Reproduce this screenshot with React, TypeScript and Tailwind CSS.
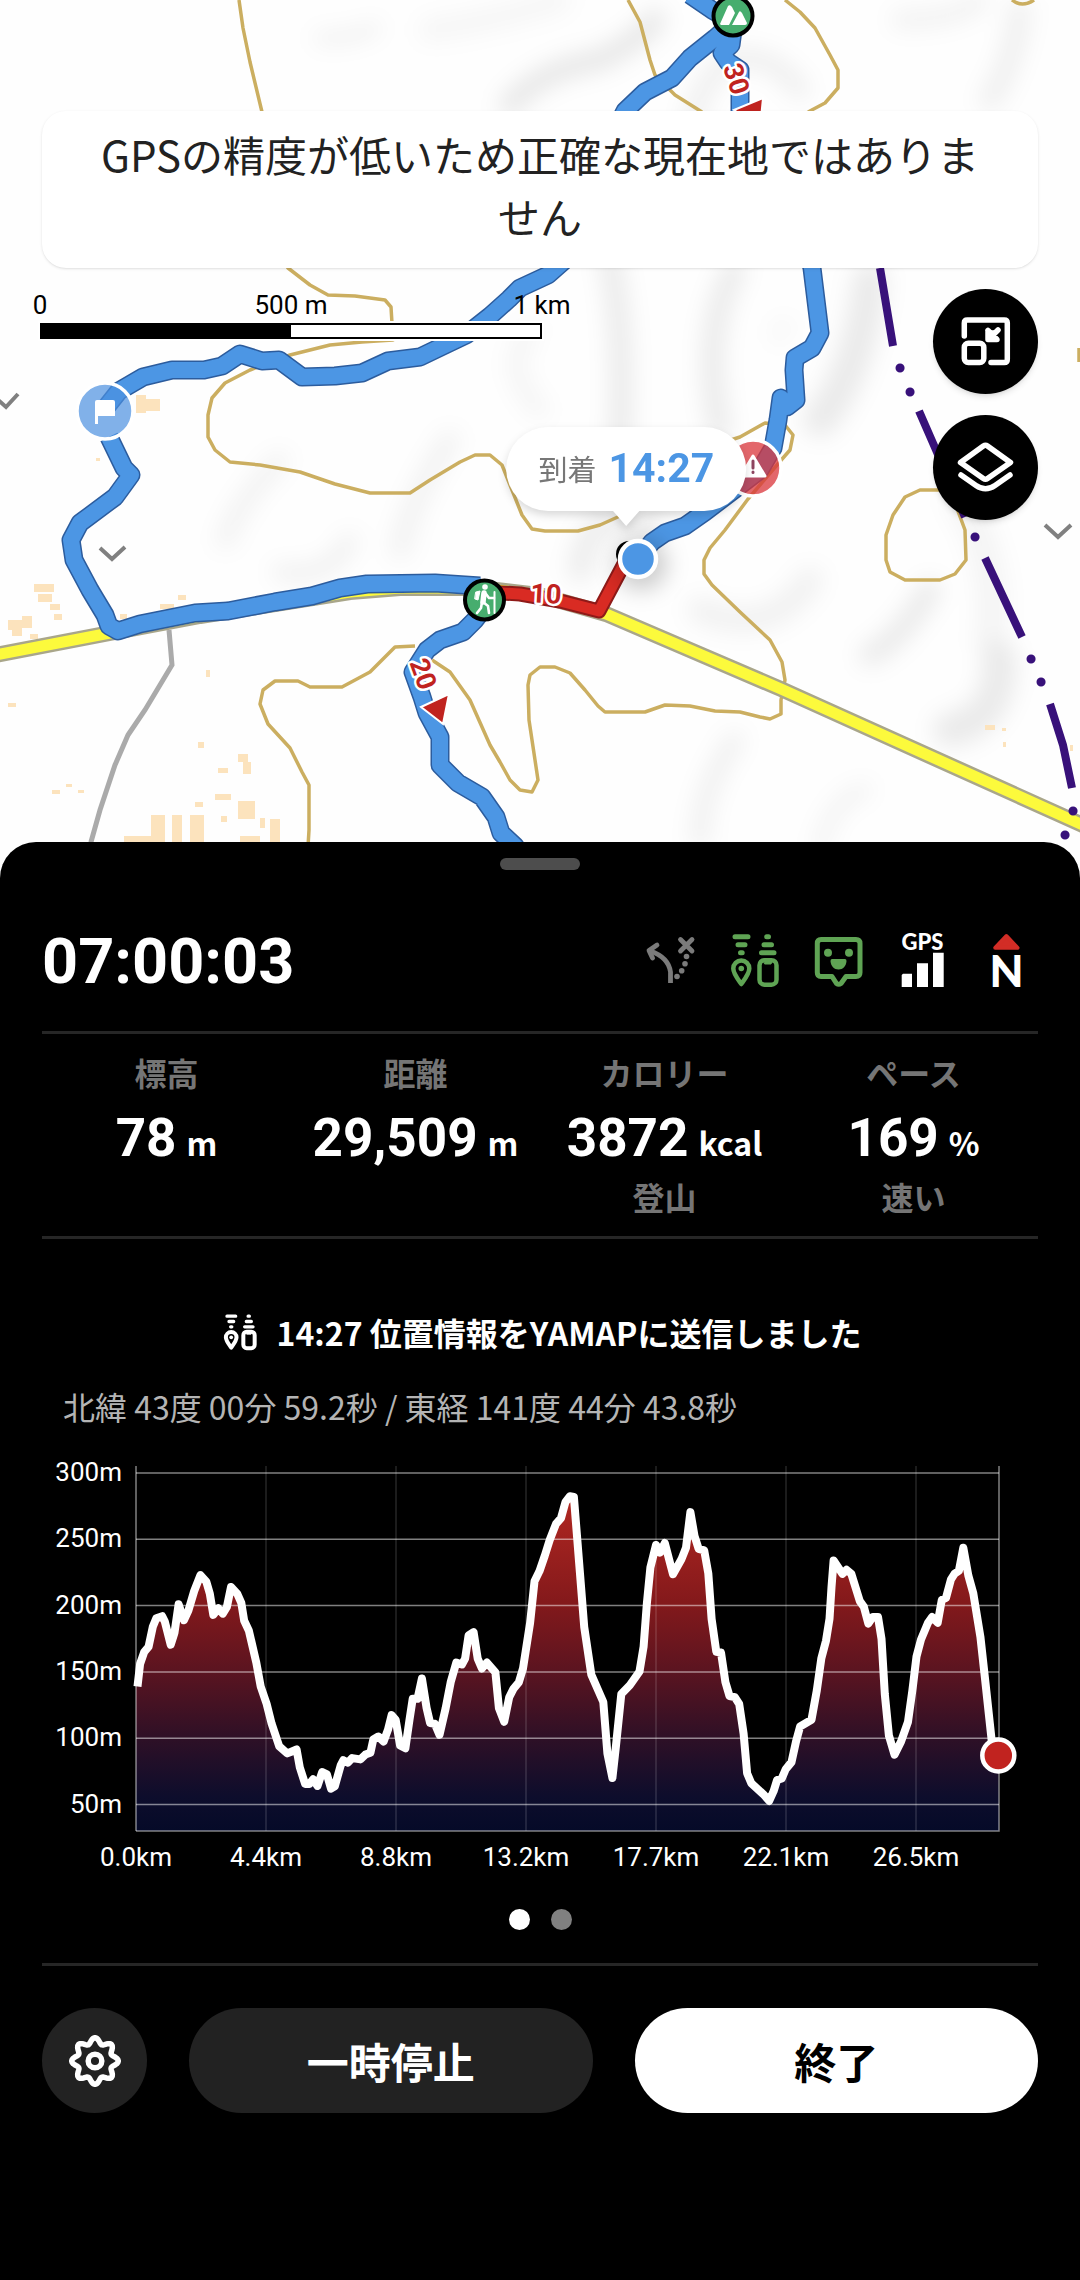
import type { ReactNode } from "react";

const JP = "font-['Noto_Sans_CJK_JP',sans-serif]";
const ROBOTO = "font-['Roboto','Noto_Sans_CJK_JP',sans-serif]";

const stats = [
  { label: "標高", value: "78", unit: "m", note: "" },
  { label: "距離", value: "29,509", unit: "m", note: "" },
  { label: "カロリー", value: "3872", unit: "kcal", note: "登山" },
  { label: "ペース", value: "169", unit: "%", note: "速い" },
];

// [distance km, elevation m]
const profile: [number, number][] = [
  [0.05, 139], [0.14, 156], [0.28, 165], [0.43, 169], [0.57, 184], [0.69, 190.5], [0.89, 192], [0.98, 188],
  [1.18, 170.5], [1.31, 179.5], [1.45, 201], [1.63, 189], [1.78, 196], [1.98, 211], [2.19, 223], [2.39, 218],
  [2.51, 209], [2.63, 193], [2.8, 198], [2.95, 194], [3.09, 199], [3.23, 214], [3.44, 209], [3.58, 202],
  [3.68, 188.5], [3.84, 181], [4.09, 157], [4.24, 139], [4.44, 126], [4.61, 111], [4.87, 94], [5.14, 88.5],
  [5.3, 90], [5.46, 91.5], [5.57, 78], [5.75, 65.5], [5.9, 65.5], [6.02, 69], [6.17, 64], [6.33, 74.5],
  [6.49, 72.7], [6.63, 62], [6.76, 63.7], [6.96, 79.5], [7.05, 83.4], [7.21, 81.6], [7.35, 85], [7.63, 84],
  [7.8, 87.6], [7.97, 89], [8.07, 99], [8.24, 101.3], [8.42, 97.4], [8.57, 106.4], [8.69, 117.4], [8.83, 113.9],
  [8.98, 94.5], [9.16, 92.4], [9.3, 113.9], [9.41, 129.7], [9.57, 129.7], [9.72, 145], [9.88, 122.8], [10, 111.5],
  [10.16, 110.9], [10.32, 102.5], [10.53, 122.8], [10.7, 142.2], [10.89, 157], [11.08, 155.6], [11.19, 160],
  [11.31, 177.5], [11.48, 180], [11.62, 160], [11.76, 152.6], [11.93, 157], [12.22, 149.7], [12.34, 122.8],
  [12.52, 112.4], [12.69, 130.9], [12.83, 137], [13.02, 142.2], [13.16, 152.6], [13.4, 187], [13.55, 218.3],
  [13.72, 226], [13.9, 237.7], [14.07, 249.6], [14.28, 261.6], [14.45, 266], [14.6, 278], [14.75, 282.4],
  [14.89, 281.9], [15.07, 231.7], [15.24, 184], [15.48, 148], [15.89, 127.3], [16.03, 88.5], [16.2, 70],
  [16.32, 94.5], [16.5, 133.3], [16.79, 140], [17.12, 150.3], [17.26, 169], [17.37, 201.9], [17.49, 228.7],
  [17.68, 245.7], [17.82, 240], [17.98, 247.2], [18.26, 223.7], [18.54, 234.7], [18.7, 243.7], [18.85, 270.5],
  [18.99, 252.6], [19.13, 242.8], [19.32, 241.6], [19.46, 224.3], [19.57, 190], [19.73, 165.2], [19.89, 164.6],
  [20.04, 142.2], [20.18, 131.8], [20.36, 131], [20.51, 125.8], [20.66, 103.4], [20.78, 73.6], [20.92, 66],
  [21.33, 57.8], [21.53, 52.7], [21.68, 60], [21.8, 68.5], [21.96, 69.7], [22.09, 76.6], [22.29, 82],
  [22.44, 97.4], [22.58, 108.8], [22.97, 113.9], [23.15, 136], [23.3, 160], [23.46, 173.5], [23.58, 190],
  [23.65, 213.8], [23.72, 234], [24.02, 224], [24.16, 227], [24.32, 224], [24.61, 203.4], [24.75, 199],
  [24.9, 186.4], [25.05, 191.4], [25.23, 191.4], [25.35, 175], [25.46, 133.3], [25.6, 102], [25.79, 87.6],
  [26.01, 97.4], [26.25, 112.4], [26.4, 136.2], [26.54, 161.6], [26.69, 174.4], [26.93, 187], [27.07, 191.4],
  [27.26, 187], [27.4, 204.3], [27.54, 205.8], [27.71, 219.8], [27.83, 224], [27.98, 226.3], [28.13, 243.7],
  [28.3, 222.8], [28.47, 209.3], [28.71, 176.5], [28.88, 142.2], [29.1, 97.4], [29.32, 87],
];

const PLOT = { left: 94, right: 957, top: 17, bottom: 382 };
const xAt = (km: number) => PLOT.left + km * 29.41;
const yAt = (m: number) => 355.5 - (m - 50) * 1.326;

function ElevationChart() {
  const line = profile.map(([km, m]) => `${xAt(km).toFixed(1)},${yAt(m).toFixed(1)}`).join(" ");
  const [lastKm, lastM] = profile[profile.length - 1];

  return (
    <svg viewBox="0 0 996 430" className={`mt-[19px] w-full ${ROBOTO}`} role="img" aria-label="標高グラフ">
      <defs>
        <linearGradient id="elevation" gradientUnits="userSpaceOnUse" x1="0" y1="45" x2="0" y2="382">
          <stop offset="0" stopColor="#b32822" />
          <stop offset="0.32" stopColor="#84191b" />
          <stop offset="0.52" stopColor="#5c1420" />
          <stop offset="0.72" stopColor="#2f1026" />
          <stop offset="0.9" stopColor="#0d0d2c" />
          <stop offset="1" stopColor="#050a28" />
        </linearGradient>
      </defs>
      <polygon
        points={`${PLOT.left},${PLOT.bottom} ${PLOT.left},237 ${line} ${PLOT.right},${PLOT.bottom}`}
        fill="url(#elevation)"
      />
      {["0.0", "4.4", "8.8", "13.2", "17.7", "22.1", "26.5"].map((km, i) => (
        <g key={km}>
          <line
            x1={PLOT.left + i * 130}
            x2={PLOT.left + i * 130}
            y1={PLOT.top}
            y2={PLOT.bottom}
            stroke="#fff"
            strokeOpacity={i === 0 ? 0.5 : 0.15}
            strokeWidth="1.5"
          />
          <text x={PLOT.left + i * 130} y="417" fontSize="26" fill="#fff" textAnchor="middle">
            {km}km
          </text>
        </g>
      ))}
      {[300, 250, 200, 150, 100, 50].map((m) => (
        <g key={m}>
          <line x1={PLOT.left} x2={PLOT.right} y1={yAt(m)} y2={yAt(m)} stroke="#fff" strokeOpacity="0.5" strokeWidth="1.5" />
          <text x="80" y={yAt(m) + 8} fontSize="26" fill="#fff" textAnchor="end">
            {m}m
          </text>
        </g>
      ))}
      <path
        d={`M${PLOT.left} ${PLOT.bottom}H${PLOT.right}V${PLOT.top}`}
        fill="none"
        stroke="#fff"
        strokeOpacity="0.5"
        strokeWidth="1.5"
      />
      <polyline points={line} fill="none" stroke="#fff" strokeWidth="8" strokeLinejoin="round" />
      <circle cx={xAt(lastKm)} cy={yAt(lastM)} r="16" fill="#c1231f" stroke="#fff" strokeWidth="4.5" />
    </svg>
  );
}

const contours = [
  "M239 0L243 28L250 62L262 112",
  "M275 250L288 268L310 285L328 295L355 296L385 300L391 307L393 340L362 342L330 345L290 355L250 370L225 383L212 398L208 415V437L215 450L230 462L260 465L300 472L335 484L370 493H410L430 480L460 462L475 455H490L502 465L510 485L522 515L532 529L545 531H578L600 525L620 516L700 450L740 437L765 423L785 425L793 435L790 450L783 458L748 499L725 530L710 548L704 560V574L712 585L740 612L770 640L782 662L785 680L781 700V714L770 719L760 717L740 712L715 711L690 706L665 705L645 712H605L598 706L585 690L570 673L555 667H540L530 675L528 685L529 720L535 760L538 780L532 792L520 790L510 780L500 762L490 745L470 700L450 672L432 660",
  "M415 646L395 647L370 672L342 687H310L298 681H275L263 690L260 704L268 724L290 748L302 772L309 785V830L306 880",
  "M920 490H940L955 503L965 530L966 560L955 574L940 580H905L890 572L886 560V535L893 515L905 497Z",
  "M628 0L640 22L650 60L655 75L675 95L702 112",
  "M785 0L800 12L815 28L830 55L838 70V88L825 103L808 112",
  "M1012 0Q1022 8 1034 0M1079 348V362",
];

const route =
  "M104 410L119 391L143 377L172 370H204L222 366L240 354L262 361L279 360L302 377L335 376L362 373L388 361L420 357L445 345L466 335L490 316L509 299L520 288L548 275L565 260L600 160L625 111L645 92L672 78L690 58L715 38L733 22L712 10L690 -5" +
  "M733 30L731 45L722 53L728 62L740 70V111L790 180L812 268L820 333L812 348L795 358L794 370L796 400L787 407L781 398L778 420L773 448L760 470L705 512L685 526L665 533L652 542L638 560" +
  "M109 437L124 468L131 475L115 497L80 523L71 540L74 560L90 590L105 615L109 626L118 631L140 624L195 613L228 611L275 602L312 596L340 588L367 584L435 583L480 586" +
  "M484 608L475 620L463 632L440 640L427 650L413 672L422 697L427 713L440 737V765L458 783L482 797L496 817L501 833L515 846L530 870";

// soft relief: [path, stroke width, opacity]
const shades: [string, number, number][] = [
  ["M320 38Q350 40 375 28", 12, 0.06],
  ["M430 30Q500 20 560 0", 24, 0.03],
  ["M510 105Q540 70 600 60Q640 40 655 20", 22, 0.09],
  ["M690 130Q700 80 730 60Q770 50 800 90", 20, 0.06],
  ["M610 260Q625 330 620 440", 22, 0.08],
  ["M735 270Q700 330 720 430", 22, 0.08],
  ["M870 280Q860 370 820 420", 34, 0.08],
  ["M900 20Q960 20 980 0", 18, 0.05],
  ["M990 100Q1015 60 1020 10", 22, 0.06],
  ["M225 540Q240 500 280 460", 18, 0.05],
  ["M280 572Q330 580 350 540", 16, 0.06],
  ["M400 550Q410 500 450 440", 20, 0.05],
  ["M580 570Q590 500 650 525", 24, 0.07],
  ["M700 610Q770 640 810 580", 26, 0.05],
  ["M870 655Q900 640 930 590", 22, 0.08],
  ["M950 730Q1000 720 1000 660", 34, 0.08],
  ["M700 840Q700 790 735 740", 18, 0.06],
  ["M820 850Q830 800 865 790", 14, 0.05],
  ["M540 410Q500 370 530 330", 18, 0.04],
  ["M990 640Q1000 560 960 500", 30, 0.04],
  ["M780 340Q770 325 790 325", 8, 0.05],
];

const buildings: [number, number, number, number][] = [
  [136, 395, 10, 18], [146, 399, 14, 12], [34, 584, 20, 8], [38, 594, 14, 8], [8, 620, 14, 10], [22, 616, 10, 12],
  [12, 630, 10, 6], [50, 604, 10, 6], [54, 614, 8, 6], [30, 634, 8, 5], [120, 614, 7, 5], [160, 604, 14, 5],
  [178, 595, 8, 5], [206, 670, 4, 7], [8, 703, 8, 4], [198, 742, 6, 6], [238, 754, 10, 8], [243, 762, 8, 12],
  [218, 768, 10, 5], [52, 790, 8, 4], [66, 784, 6, 3], [78, 790, 6, 3], [215, 794, 16, 6], [238, 801, 17, 18],
  [151, 815, 14, 30], [172, 815, 10, 30], [190, 815, 14, 30], [124, 836, 30, 8], [195, 802, 8, 5], [221, 816, 6, 6],
  [260, 818, 5, 10], [270, 819, 10, 26], [240, 836, 20, 8], [985, 725, 10, 5], [1002, 728, 4, 3], [1003, 742, 3, 5],
  [1070, 745, 3, 6], [96, 458, 4, 3],
];

const road = "M-5 655L110 633L200 616L300 600L350 592L400 588L480 588L540 595L606 614L781 689L1085 826";

function TrailMap() {
  return (
    <svg
      viewBox="0 0 1080 878"
      preserveAspectRatio="xMidYMin slice"
      className={`absolute inset-0 h-full w-full ${ROBOTO}`}
      role="img"
      aria-label="地図"
    >
      <defs>
        <filter id="shade" filterUnits="userSpaceOnUse" x="0" y="0" width="1080" height="878">
          <feGaussianBlur stdDeviation="11" />
        </filter>
      </defs>
      <rect width="1080" height="878" fill="#fefefe" />
      <g filter="url(#shade)" fill="none" stroke="#000" strokeLinecap="round">
        {shades.map(([d, width, opacity]) => (
          <path key={d} d={d} strokeWidth={width} strokeOpacity={opacity} />
        ))}
      </g>
      {buildings.map(([x, y, w, h]) => (
        <rect key={`${x}-${y}`} x={x} y={y} width={w} height={h} fill="#fce3bd" />
      ))}
      <g fill="none" stroke="#cbae60" strokeWidth="3.5" strokeLinejoin="round">
        {contours.map((d) => (
          <path key={d} d={d} />
        ))}
      </g>
      <path
        d="M-4 398L6 407L18 394M100 548L112 559L125 547M1045 525L1058 537L1071 525"
        fill="none"
        stroke="#808080"
        strokeWidth="4"
      />

      {/* Roads */}
      <path d="M169 630L172 665L145 710L128 735L115 765L100 810L91 842L80 878" fill="none" stroke="#aaa" strokeWidth="5" />
      <path d={road} fill="none" stroke="#a9a68a" strokeWidth="16" />
      <path d={road} fill="none" stroke="#fcfa3c" strokeWidth="11" />

      {/* Boundary */}
      <g fill="none" stroke="#38117a" strokeWidth="8">
        <path d="M880 268L893 346M919 411L936 450L965 517M985 558L1022 637M1050 704L1063 745L1072 788" />
        <path
          d="M900 368h.1M910 392h.1M975 537h.1M1031 659h.1M1041 682h.1M1073 811h.1M1065 835h.1"
          strokeWidth="9"
          strokeLinecap="round"
        />
      </g>

      {/* Recorded track and planned course */}
      <g fill="none" strokeLinejoin="round">
        <path d="M485 592L520 594L560 601L599 611L625 562" stroke="#8f1a18" strokeWidth="15" />
        <path d="M485 592L520 594L560 601L599 611L625 562" stroke="#d92b23" strokeWidth="11" />
        <circle cx="629" cy="554" r="13" fill="#000" />
        <path d={route} stroke="#2c5c9d" strokeWidth="19" />
        <path d={route} stroke="#4c96e4" strokeWidth="16" />
      </g>

      {/* Course arrows and minute labels */}
      <g fill="#c0231f" stroke="#fff" strokeWidth="2">
        <path d="M421 707L449 694L443 724Z" />
        <path d="M734 110L763 98L760 128Z" />
      </g>
      <g
        fill="#c0231f"
        stroke="#fff"
        strokeWidth="5"
        paintOrder="stroke"
        strokeLinejoin="round"
        fontSize="27"
        fontWeight="700"
        textAnchor="middle"
      >
        <text transform="translate(546 594) rotate(3)" y="9">10</text>
        <text transform="translate(423 674) rotate(70)" y="9">20</text>
        <text transform="translate(736 79) rotate(72)" y="9">30</text>
      </g>

      {/* Peak */}
      <circle cx="733" cy="16" r="19.5" fill="#47ad6e" stroke="#000" strokeWidth="4" />
      <path d="M720 24L728 6Q730 4 732 7L735 13L729 25H721ZM732 25L739 12Q740 10 742 13L747 23Q747 25 745 25Z" fill="#fff" />

      {/* Trailhead */}
      <circle cx="484.5" cy="600" r="19.5" fill="#47ad6e" stroke="#000" strokeWidth="4" />
      <g fill="none" stroke="#fff" strokeLinecap="round" strokeLinejoin="round">
        <circle cx="485" cy="587" r="2.8" fill="#fff" stroke="none" />
        <path d="M476 592L480 591L478 600L475 599Z" fill="#fff" strokeWidth="1" />
        <path d="M484 593L483 602" strokeWidth="5.5" />
        <path d="M483 602L488 606L489 613M482 602L481 608L477 613M486 594L489 598L494 598" strokeWidth="2.6" />
        <path d="M494.5 592V613" strokeWidth="2" />
      </g>

      {/* Start flag */}
      <circle cx="105" cy="411" r="28" fill="#4c90e0" fillOpacity="0.7" stroke="#fff" strokeWidth="3.5" />
      <path d="M95 402Q95 400 97 400H113Q115 400 115 402V416H98V424H95Z" fill="#fff" />

      {/* Caution */}
      <circle cx="753" cy="468" r="28" fill="#d9343a" fillOpacity="0.75" stroke="#fff" strokeWidth="3.5" />
      <path d="M753 456L765 476H741Z" fill="#fff" stroke="#fff" strokeWidth="3" strokeLinejoin="round" />
      <path d="M753 461V468M753 472v.5" stroke="#8e4560" strokeWidth="3" strokeLinecap="round" />

      {/* Current location */}
      <circle cx="641" cy="564" r="26" fill="#000" fillOpacity="0.2" filter="url(#shade)" />
      <circle cx="638" cy="559" r="18" fill="#4c96e4" stroke="#fff" strokeWidth="4.5" />
    </svg>
  );
}

function ScaleBar() {
  return (
    <div className={`-ml-0.5 w-[502px] ${ROBOTO}`}>
      <div className="-mx-10 flex justify-between text-[26px] leading-8 text-black">
        <span className="w-20 text-center">0</span>
        <span className="w-20 text-center">500 m</span>
        <span className="w-20 text-center">1 km</span>
      </div>
      <div className="mt-0.5 flex h-4 border-2 border-black bg-white ring-2 ring-white">
        <div className="w-1/2 bg-black" />
      </div>
    </div>
  );
}

function MapButton({ label, children }: { label: string; children: ReactNode }) {
  return (
    <button aria-label={label} className="size-[105px] rounded-full bg-black text-white shadow-md">
      <svg
        viewBox="0 0 105 105"
        fill="none"
        stroke="currentColor"
        strokeWidth="5.5"
        strokeLinecap="round"
        strokeLinejoin="round"
      >
        {children}
      </svg>
    </button>
  );
}

function BeaconGlyph({ weight = 4.5 }: { weight?: number }) {
  return (
    <g fill="none" stroke="currentColor" strokeWidth="5" strokeLinecap="round" strokeLinejoin="round">
      <path d="M12 7.7H25M15 15.7H22M17.5 23.7H19.2M43.7 7.7H45.5M41 15.7H48.5M38.5 23.7H51" />
      <path
        d="M18.3 55C14 49 10.3 44.500 10.3 39.5A8 8 0 0 1 26.3 39.5C26.3 44.500 22.600 49 18.3 55Z"
        strokeWidth={weight}
      />
      <circle cx="18.3" cy="39.5" r="2.8" fill="currentColor" stroke="none" />
      <rect x="36.5" y="31.2" width="17" height="24.5" rx="5" strokeWidth={weight} />
      <path d="M41 32.5H49L48 35H42Z" strokeWidth="1" fill="currentColor" />
    </g>
  );
}

function StatusIcons() {
  return (
    <div className="flex gap-[21px]">
      <svg viewBox="0 0 63 63" className="size-[63px] text-[#7b7b7b]" role="img" aria-label="ルート外れ警告オフ">
        <g fill="none" stroke="currentColor" strokeWidth="4.8" strokeLinecap="round" strokeLinejoin="round">
          <path d="M31.500 54V43C30 32 23 26 11 22" strokeLinecap="butt" />
          <path d="M18 16L10 21.500L13.500 29" />
          <path d="M41.500 10.500L53 22M53 10.500L41.500 22" />
        </g>
        <g fill="currentColor">
          <circle cx="47.5" cy="27.5" r="2.8" />
          <circle cx="46" cy="34.7" r="2.8" />
          <circle cx="42.7" cy="41.7" r="2.8" />
          <circle cx="38" cy="47.5" r="2.8" />
        </g>
      </svg>
      <svg viewBox="0 0 63 63" className="size-[63px] text-[#5fa454]" role="img" aria-label="みまもり機能">
        <BeaconGlyph />
      </svg>
      <svg viewBox="0 0 63 63" className="size-[63px] text-[#5fa454]" role="img" aria-label="すれちがい通信">
        <path
          d="M14 10.500H49Q53 10.500 53 14.500V43.500Q53 47.500 49 47.500H39L34 54.500Q31.700 56 29.500 54.500L25 47.500H14Q10.300 47.500 10.300 43.500V14.500Q10.300 10.500 14 10.500Z"
          fill="none"
          stroke="currentColor"
          strokeWidth="5"
          strokeLinejoin="round"
        />
        <circle cx="21" cy="23.7" r="4" fill="currentColor" />
        <circle cx="42" cy="23.7" r="4" fill="currentColor" />
        <path d="M25 30H38Q39.500 30 39.500 32C39 37.500 36 40.500 31.500 40.500S24 37.500 23.500 32Q23.500 30 25 30Z" fill="currentColor" />
      </svg>
      <svg
        viewBox="0 0 63 63"
        className="size-[63px] overflow-visible font-['Lato',sans-serif]"
        fill="#fff"
        role="img"
        aria-label="GPS 受信強度"
      >
        <text x="31.5" y="20.7" fontSize="22" fontWeight="900" textAnchor="middle">
          GPS
        </text>
        <path d="M12 44.700H21V58H10.700V46ZM26 34.300H37V58H26ZM42 23.700H52.700V58H42Z" />
      </svg>
      <svg
        viewBox="0 0 63 63"
        className="size-[63px] overflow-visible font-['Lato',sans-serif]"
        fill="#fff"
        role="img"
        aria-label="北"
      >
        <path d="M31.300 7L42.500 18.800H20.200Z" fill="#d22d26" stroke="#d22d26" strokeWidth="4" strokeLinejoin="round" />
        <text x="31.5" y="58" fontSize="44" fontWeight="900" textAnchor="middle">
          N
        </text>
      </svg>
    </div>
  );
}

const gear = Array.from({ length: 96 }, (_, i) => {
  const a = (i / 96) * Math.PI * 2;
  const r = 20.4 + 2.9 * Math.cos(8 * a);
  return `${(30 + r * Math.sin(a)).toFixed(2)},${(30 - r * Math.cos(a)).toFixed(2)}`;
}).join(" ");

export default function App() {
  return (
    <div className={`flex min-h-screen flex-col bg-black text-white ${JP}`}>
      {/* Map */}
      <section className="relative aspect-[1080/878] overflow-hidden">
        <TrailMap />

        <div className="absolute top-[48.6%] left-[58%] -translate-x-1/2 drop-shadow-lg">
          <div className="flex h-[84px] items-center gap-3 rounded-full bg-white px-8 whitespace-nowrap">
            <span className="text-[29px] text-[#777]">到着</span>
            <span className={`text-[41px] font-bold text-[#4c96e4] ${ROBOTO}`}>14:27</span>
          </div>
          <svg viewBox="0 0 28 16" className="mx-auto -mt-px w-7" fill="#fff">
            <path d="M0 0H28L14 16Z" />
          </svg>
        </div>

        <div className="relative px-[42px] pt-[111px]">
          <p
            role="alert"
            className="rounded-[24px] bg-white px-12 pt-3 pb-[21px] text-center text-[42px] leading-[62px] text-[#222] shadow"
          >
            GPSの精度が低いため正確な現在地ではありません
          </p>
          <div className="mt-[21px] flex items-start justify-between">
            <ScaleBar />
            <div className="flex flex-col gap-[21px]">
              <MapButton label="全画面を終了">
                <path d="M31.300 47V34Q31.300 31 34.300 31H71.300Q74.300 31 74.300 34V70.500Q74.300 73.500 71.300 73.500H58" />
                <rect x="31.3" y="54.3" width="19.5" height="19.2" rx="4" />
                <path d="M55 41.500V50.500H64L55 41.500L60 46L65 41" fill="currentColor" />
              </MapButton>
              <MapButton label="レイヤー">
                <path d="M50.300 31Q52.500 29.500 54.500 31L77.500 47.500L54.500 63.500Q52.500 65 50.300 63.500L27.500 47.500Z" />
                <path d="M28 60L43 70.500Q52.500 77 62 70.500L77 60" />
              </MapButton>
            </div>
          </div>
        </div>
      </section>

      {/* Activity sheet */}
      <section className="relative -mt-9 flex-1 rounded-t-[36px] bg-black px-[42px] pt-4 pb-12">
        <div className="mx-auto h-3 w-20 rounded-full bg-[#4d4d4d]" />

        <header className="mt-[52px] flex items-center justify-between pb-[33px]">
          <h1 className={`pt-1 text-[63px] leading-[72px] font-bold ${ROBOTO}`}>07:00:03</h1>
          <StatusIcons />
        </header>

        <dl className="grid grid-cols-4 border-y-[3px] border-[#262626] pt-3.5 pb-4 text-center text-[32px] leading-[48px] font-bold">
          {stats.map((stat) => (
            <div key={stat.label}>
              <dt className="text-[#757575]">{stat.label}</dt>
              <dd className="h-[76px] leading-[84px] whitespace-nowrap">
                <span className={`text-[53px] ${ROBOTO}`}>{stat.value}</span>
                <span className="ml-2.5">{stat.unit}</span>
              </dd>
              <dd className="h-12 text-[#757575]">{stat.note}</dd>
            </div>
          ))}
        </dl>

        <p className="mt-[69px] flex items-center justify-center gap-4 text-[32px] leading-[48px] font-bold">
          <svg viewBox="0 0 63 63" className="size-[42px]" aria-hidden="true">
            <BeaconGlyph weight={6} />
          </svg>
          14:27 位置情報をYAMAPに送信しました
        </p>
        <p className="mt-[26px] pl-[21px] text-[32px] leading-[48px] text-[#b4b4b4]">
          北緯 43度 00分 59.2秒 / 東経 141度 44分 43.8秒
        </p>

        <ElevationChart />

        <div className="mt-[30px] flex justify-center gap-[21px]">
          <button aria-label="1ページ目" className="size-[21px] rounded-full bg-white" />
          <button aria-label="2ページ目" className="size-[21px] rounded-full bg-[#808080]" />
        </div>

        <footer className="mt-[33px] flex gap-[42px] border-t-[3px] border-[#262626] pt-[42px]">
          <button aria-label="設定" className="flex size-[105px] shrink-0 items-center justify-center rounded-full bg-[#222]">
            <svg viewBox="0 0 60 60" className="size-[60px]" fill="none" stroke="#fff" strokeWidth="5.5" strokeLinejoin="round">
              <polygon points={gear} />
              <circle cx="30" cy="30" r="6.8" />
            </svg>
          </button>
          <button className="h-[105px] flex-1 rounded-full bg-[#222] text-[42px] font-bold text-white">一時停止</button>
          <button className="h-[105px] flex-1 rounded-full bg-white text-[42px] font-bold text-black">終了</button>
        </footer>
      </section>
    </div>
  );
}
